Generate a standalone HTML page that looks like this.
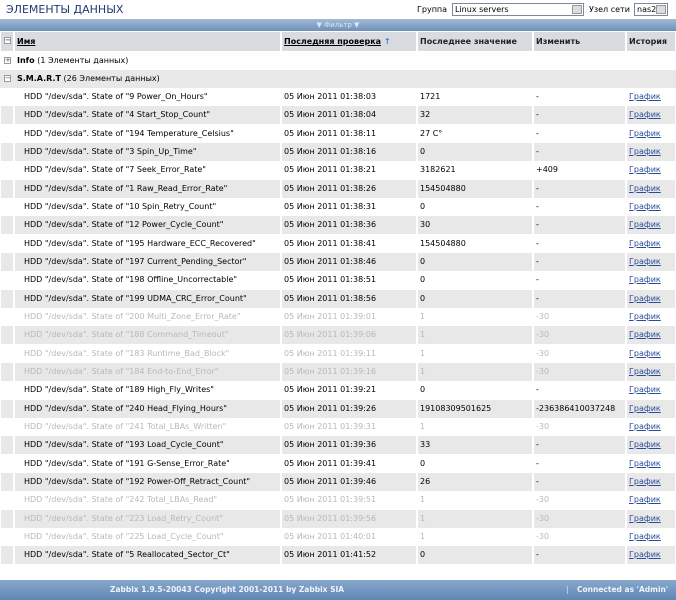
<!DOCTYPE html>
<html><head><meta charset="utf-8"><style>
*{margin:0;padding:0;box-sizing:border-box}
body{width:676px;height:600px;background:#fff;font-family:"DejaVu Sans","Liberation Sans",sans-serif;font-size:8px;color:#000;position:relative;overflow:hidden}
.tb{position:absolute;left:0;top:0;width:676px;height:20px;border-bottom:1px solid #a8b8cc;background:#fff}
.tb h1{position:absolute;left:6px;top:3px;font-size:11px;font-weight:normal;color:#1f3a78;font-family:"DejaVu Sans",sans-serif}
.sel{position:absolute;top:3px;height:13px;border:1px solid #7a8a9a;background:#fff;font-size:8px;padding:1px 2px}
.sel i{position:absolute;right:1px;top:1px;width:10px;height:9px;background:#ddd;border:1px solid #999}
.fb{position:absolute;left:0;top:20px;width:676px;height:11px;background:linear-gradient(#9cb6d6,#6f90ba);color:#dde8f6;font-size:7px;text-align:center;line-height:11px}
.r{position:absolute;left:0;width:676px;height:18px}
.r span{position:absolute;top:0;height:18px;line-height:18px;white-space:nowrap;overflow:hidden}
.g span{background:#e8e8e8}
.c0{left:1px;width:12px}.c1{left:15px;width:265px;padding-left:9px}.c2{left:282px;width:134px;padding-left:2px}.c3{left:418px;width:114px;padding-left:2px}.c4{left:534px;width:91px;padding-left:2px}.c5{left:627px;width:48px;padding-left:2px}
.c5 a{color:#2a4a9a;text-decoration:underline}
.d span{color:#b8b8b8}.d span.c5{color:#000}
.h span{background:#d8dce0;font-weight:bold;color:#222;font-size:8px}
.h a{color:#000;text-decoration:underline}
.box{display:inline-block;width:7px;height:7px;border:1px solid #999;background:#fff;position:absolute;left:3px;top:5px;font-size:7px;line-height:5px;text-align:center;color:#555}
.ft{position:absolute;left:0;top:580px;width:676px;height:20px;background:linear-gradient(#88a8cc,#5f86b6);color:#f0f4fa;font-weight:bold;font-size:7.5px;line-height:20px}
</style></head><body>
<div class="tb"><h1>ЭЛЕМЕНТЫ ДАННЫХ</h1>
<span style="position:absolute;left:417px;top:5px">Группа</span>
<div class="sel" style="left:452px;width:132px">Linux servers<i></i></div>
<span style="position:absolute;left:589px;top:5px">Узел сети</span>
<div class="sel" style="left:634px;width:34px">nas2<i></i></div></div>
<div class="fb">▼ Фильтр ▼</div>
<div class="r h" style="top:32px;height:19px"><span class="c0" style="height:19px"><i class="box">−</i></span><span class="c1" style="padding-left:2px;height:19px;line-height:19px"><a>Имя</a></span><span class="c2" style="height:19px;line-height:19px"><a>Последняя проверка</a> <b style="color:#4a7abe">↑</b></span><span class="c3" style="height:19px;line-height:19px">Последнее значение</span><span class="c4" style="height:19px;line-height:19px">Изменить</span><span class="c5" style="height:19px;line-height:19px">История</span></div>
<div class="r" style="top:52px"><span class="c0"><i class="box">+</i></span><span class="c1" style="padding-left:2px;width:660px"><b>Info</b> (1 Элементы данных)</span></div>
<div class="r" style="top:70px;background:#e8e8e8"><span class="c0"><i class="box">−</i></span><span class="c1" style="padding-left:2px;width:660px"><b>S.M.A.R.T</b> (26 Элементы данных)</span></div>
<div class="r" style="top:88px"><span class="c0"></span><span class="c1">HDD "/dev/sda". State of "9 Power_On_Hours"</span><span class="c2">05 Июн 2011 01:38:03</span><span class="c3">1721</span><span class="c4">-</span><span class="c5"><a>График</a></span></div>
<div class="r g" style="top:106px"><span class="c0"></span><span class="c1">HDD "/dev/sda". State of "4 Start_Stop_Count"</span><span class="c2">05 Июн 2011 01:38:04</span><span class="c3">32</span><span class="c4">-</span><span class="c5"><a>График</a></span></div>
<div class="r" style="top:125px"><span class="c0"></span><span class="c1">HDD "/dev/sda". State of "194 Temperature_Celsius"</span><span class="c2">05 Июн 2011 01:38:11</span><span class="c3">27 C°</span><span class="c4">-</span><span class="c5"><a>График</a></span></div>
<div class="r g" style="top:143px"><span class="c0"></span><span class="c1">HDD "/dev/sda". State of "3 Spin_Up_Time"</span><span class="c2">05 Июн 2011 01:38:16</span><span class="c3">0</span><span class="c4">-</span><span class="c5"><a>График</a></span></div>
<div class="r" style="top:161px"><span class="c0"></span><span class="c1">HDD "/dev/sda". State of "7 Seek_Error_Rate"</span><span class="c2">05 Июн 2011 01:38:21</span><span class="c3">3182621</span><span class="c4">+409</span><span class="c5"><a>График</a></span></div>
<div class="r g" style="top:180px"><span class="c0"></span><span class="c1">HDD "/dev/sda". State of "1 Raw_Read_Error_Rate"</span><span class="c2">05 Июн 2011 01:38:26</span><span class="c3">154504880</span><span class="c4">-</span><span class="c5"><a>График</a></span></div>
<div class="r" style="top:198px"><span class="c0"></span><span class="c1">HDD "/dev/sda". State of "10 Spin_Retry_Count"</span><span class="c2">05 Июн 2011 01:38:31</span><span class="c3">0</span><span class="c4">-</span><span class="c5"><a>График</a></span></div>
<div class="r g" style="top:216px"><span class="c0"></span><span class="c1">HDD "/dev/sda". State of "12 Power_Cycle_Count"</span><span class="c2">05 Июн 2011 01:38:36</span><span class="c3">30</span><span class="c4">-</span><span class="c5"><a>График</a></span></div>
<div class="r" style="top:235px"><span class="c0"></span><span class="c1">HDD "/dev/sda". State of "195 Hardware_ECC_Recovered"</span><span class="c2">05 Июн 2011 01:38:41</span><span class="c3">154504880</span><span class="c4">-</span><span class="c5"><a>График</a></span></div>
<div class="r g" style="top:253px"><span class="c0"></span><span class="c1">HDD "/dev/sda". State of "197 Current_Pending_Sector"</span><span class="c2">05 Июн 2011 01:38:46</span><span class="c3">0</span><span class="c4">-</span><span class="c5"><a>График</a></span></div>
<div class="r" style="top:271px"><span class="c0"></span><span class="c1">HDD "/dev/sda". State of "198 Offline_Uncorrectable"</span><span class="c2">05 Июн 2011 01:38:51</span><span class="c3">0</span><span class="c4">-</span><span class="c5"><a>График</a></span></div>
<div class="r g" style="top:290px"><span class="c0"></span><span class="c1">HDD "/dev/sda". State of "199 UDMA_CRC_Error_Count"</span><span class="c2">05 Июн 2011 01:38:56</span><span class="c3">0</span><span class="c4">-</span><span class="c5"><a>График</a></span></div>
<div class="r d" style="top:308px"><span class="c0"></span><span class="c1">HDD "/dev/sda". State of "200 Multi_Zone_Error_Rate"</span><span class="c2">05 Июн 2011 01:39:01</span><span class="c3">1</span><span class="c4">-30</span><span class="c5"><a>График</a></span></div>
<div class="r g d" style="top:326px"><span class="c0"></span><span class="c1">HDD "/dev/sda". State of "188 Command_Timeout"</span><span class="c2">05 Июн 2011 01:39:06</span><span class="c3">1</span><span class="c4">-30</span><span class="c5"><a>График</a></span></div>
<div class="r d" style="top:345px"><span class="c0"></span><span class="c1">HDD "/dev/sda". State of "183 Runtime_Bad_Block"</span><span class="c2">05 Июн 2011 01:39:11</span><span class="c3">1</span><span class="c4">-30</span><span class="c5"><a>График</a></span></div>
<div class="r g d" style="top:363px"><span class="c0"></span><span class="c1">HDD "/dev/sda". State of "184 End-to-End_Error"</span><span class="c2">05 Июн 2011 01:39:16</span><span class="c3">1</span><span class="c4">-30</span><span class="c5"><a>График</a></span></div>
<div class="r" style="top:381px"><span class="c0"></span><span class="c1">HDD "/dev/sda". State of "189 High_Fly_Writes"</span><span class="c2">05 Июн 2011 01:39:21</span><span class="c3">0</span><span class="c4">-</span><span class="c5"><a>График</a></span></div>
<div class="r g" style="top:400px"><span class="c0"></span><span class="c1">HDD "/dev/sda". State of "240 Head_Flying_Hours"</span><span class="c2">05 Июн 2011 01:39:26</span><span class="c3">19108309501625</span><span class="c4">-236386410037248</span><span class="c5"><a>График</a></span></div>
<div class="r d" style="top:418px"><span class="c0"></span><span class="c1">HDD "/dev/sda". State of "241 Total_LBAs_Written"</span><span class="c2">05 Июн 2011 01:39:31</span><span class="c3">1</span><span class="c4">-30</span><span class="c5"><a>График</a></span></div>
<div class="r g" style="top:436px"><span class="c0"></span><span class="c1">HDD "/dev/sda". State of "193 Load_Cycle_Count"</span><span class="c2">05 Июн 2011 01:39:36</span><span class="c3">33</span><span class="c4">-</span><span class="c5"><a>График</a></span></div>
<div class="r" style="top:455px"><span class="c0"></span><span class="c1">HDD "/dev/sda". State of "191 G-Sense_Error_Rate"</span><span class="c2">05 Июн 2011 01:39:41</span><span class="c3">0</span><span class="c4">-</span><span class="c5"><a>График</a></span></div>
<div class="r g" style="top:473px"><span class="c0"></span><span class="c1">HDD "/dev/sda". State of "192 Power-Off_Retract_Count"</span><span class="c2">05 Июн 2011 01:39:46</span><span class="c3">26</span><span class="c4">-</span><span class="c5"><a>График</a></span></div>
<div class="r d" style="top:491px"><span class="c0"></span><span class="c1">HDD "/dev/sda". State of "242 Total_LBAs_Read"</span><span class="c2">05 Июн 2011 01:39:51</span><span class="c3">1</span><span class="c4">-30</span><span class="c5"><a>График</a></span></div>
<div class="r g d" style="top:510px"><span class="c0"></span><span class="c1">HDD "/dev/sda". State of "223 Load_Retry_Count"</span><span class="c2">05 Июн 2011 01:39:56</span><span class="c3">1</span><span class="c4">-30</span><span class="c5"><a>График</a></span></div>
<div class="r d" style="top:528px"><span class="c0"></span><span class="c1">HDD "/dev/sda". State of "225 Load_Cycle_Count"</span><span class="c2">05 Июн 2011 01:40:01</span><span class="c3">1</span><span class="c4">-30</span><span class="c5"><a>График</a></span></div>
<div class="r g" style="top:546px"><span class="c0"></span><span class="c1">HDD "/dev/sda". State of "5 Reallocated_Sector_Ct"</span><span class="c2">05 Июн 2011 01:41:52</span><span class="c3">0</span><span class="c4">-</span><span class="c5"><a>График</a></span></div>
<div class="ft"><span style="position:absolute;left:110px">Zabbix 1.9.5-20043 Copyright 2001-2011 by Zabbix SIA</span><span style="position:absolute;left:566px;color:#c8d6e8">|</span><span style="position:absolute;left:577px">Connected as 'Admin'</span></div>
</body></html>
